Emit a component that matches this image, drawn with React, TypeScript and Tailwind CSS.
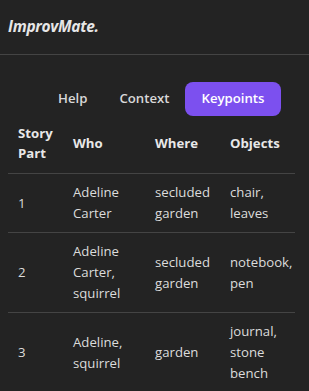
import React from "react";

const rows = [
  { n: "1", who: "Adeline Carter", where: "secluded garden", obj: "chair, leaves" },
  { n: "2", who: "Adeline Carter, squirrel", where: "secluded garden", obj: "notebook, pen" },
  { n: "3", who: "Adeline, squirrel", where: "garden", obj: "journal, stone bench" },
];

export default function App() {
  return (
    <div
      className="w-[309px] h-[391px] overflow-hidden bg-[#232323] text-[#dcdcdc]"
      style={{ fontFamily: '"Open Sans", "Noto Sans", sans-serif' }}
    >
      <div className="h-[55px] flex items-center px-2 border-b border-[#444]">
        <span className="italic font-bold text-[15.5px] text-[#e6e6e6] tracking-[-0.3px]">ImprovMate.</span>
      </div>
      <div className="flex pl-[42px] mt-[27px]">
        <button className="px-4 h-[34px] text-[13.2px] font-semibold text-[#d8d8d8] rounded-lg">Help</button>
        <button className="px-4 h-[34px] text-[13.2px] font-semibold text-[#d8d8d8] rounded-lg">Context</button>
        <button className="px-4 h-[34px] text-[13.2px] font-semibold text-white bg-[#7c50ef] rounded-lg">Keypoints</button>
      </div>
      <table className="ml-2 mt-[7px] w-[287px] table-fixed border-collapse text-[13.2px] leading-5">
        <colgroup>
          <col className="w-[55px]" />
          <col className="w-[82px]" />
          <col className="w-[75px]" />
          <col className="w-[75px]" />
        </colgroup>
        <thead>
          <tr className="border-b border-[#444]">
            <th className="text-left font-bold text-[#e8e8e8] pl-[10px] pr-1 pt-0 pb-[10px]">Story Part</th>
            <th className="text-left font-bold text-[#e8e8e8] pl-[10px] pr-1 pt-0 pb-[10px]">Who</th>
            <th className="text-left font-bold text-[#e8e8e8] pl-[10px] pr-1 pt-0 pb-[10px]">Where</th>
            <th className="text-left font-bold text-[#e8e8e8] pl-[10px] pr-1 pt-0 pb-[10px]">Objects</th>
          </tr>
        </thead>
        <tbody className="leading-[21px]">
          {rows.map((r) => (
            <tr key={r.n} className="border-b border-[#444]">
              <td className="pl-[10px] pr-1 py-[8px] align-middle">{r.n}</td>
              <td className="pl-[10px] pr-1 py-[8px] align-middle">{r.who}</td>
              <td className="pl-[10px] pr-1 py-[8px] align-middle">{r.where}</td>
              <td className="pl-[10px] pr-0 py-[8px] align-middle">{r.obj}</td>
            </tr>
          ))}
        </tbody>
      </table>
    </div>
  );
}
